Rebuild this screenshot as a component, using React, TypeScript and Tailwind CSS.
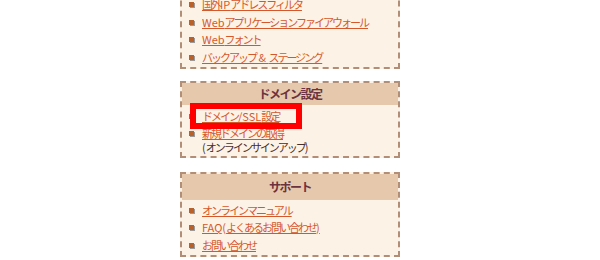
import * as React from "react";

type Item = { label: string; note?: string };

const securityItems: Item[] = [
  { label: "国外IPアドレスフィルタ" },
  { label: "Webアプリケーションファイアウォール" },
  { label: "Webフォント" },
  { label: "バックアップ & ステージング" },
];

const domainItems: Item[] = [
  { label: "ドメイン/SSL設定" },
  { label: "新規ドメインの取得", note: "(オンラインサインアップ)" },
];

const supportItems: Item[] = [
  { label: "オンラインマニュアル" },
  { label: "FAQ(よくあるお問い合わせ)" },
  { label: "お問い合わせ" },
];

// latin runs keep normal spacing, kana gets squeezed
function Squeeze({ text }: { text: string }) {
  const parts = text.split(/([A-Za-z/&() ]+)/).filter(Boolean);
  return (
    <>
      {parts.map((p, i) =>
        /^[A-Za-z/&() ]+$/.test(p) ? (
          <span key={i} className="tracking-[0px] whitespace-pre">
            {p}
          </span>
        ) : (
          <span key={i}>{p}</span>
        )
      )}
    </>
  );
}

function MenuList({ items, className }: { items: Item[]; className?: string }) {
  return (
    <ul className={`flex flex-col gap-[3.5px] pl-[7px] ${className ?? ""}`}>
      {items.map((item) => (
        <li key={item.label} className="flex items-start leading-[14px]">
          <span className="mt-[5px] mr-[8px] h-[5px] w-[5px] shrink-0 bg-[#b8612a] shadow-[1px_1px_0_#9a9a9a]" />
          <span className="flex flex-col">
            <a href="#" className="text-[#d4582c] underline underline-offset-[1px]">
              <Squeeze text={item.label} />
            </a>
            {item.note && (
              <span className="text-[#4a2e2a]">
                <Squeeze text={item.note} />
              </span>
            )}
          </span>
        </li>
      ))}
    </ul>
  );
}

function MenuBox({
  title,
  headerClass,
  children,
  className,
}: {
  title?: string;
  headerClass?: string;
  children: React.ReactNode;
  className?: string;
}) {
  return (
    <div
      className={`relative w-[220px] border-2 border-dashed border-[#b38e77] bg-[#fdf2e6] ${className ?? ""}`}
    >
      {title && (
        <div
          className={`flex items-center justify-center bg-[#e6c9ad] font-bold text-[#6b3340] ${headerClass ?? ""}`}
        >
          {title}
        </div>
      )}
      {children}
    </div>
  );
}

export default function App() {
  return (
    <div
      className="h-[260px] w-[600px] overflow-hidden bg-white text-[11px] tracking-[-2px]"
      style={{ fontFamily: '"Noto Sans CJK JP", "Noto Sans", sans-serif' }}
    >
      <div className="flex flex-col pl-[180px]">
        <MenuBox className="-mt-[10px] border-t-transparent">
          <MenuList items={securityItems} className="pt-[5px] pb-[3px]" />
        </MenuBox>

        <MenuBox
          title="ドメイン設定"
          headerClass="h-[22px] text-[12px] tracking-[-1.5px]"
          className="mt-[12px]"
        >
          <MenuList items={domainItems} className="pt-[4px] pb-[1.5px]" />
          <div className="absolute left-[8px] top-[20px] h-[26px] w-[112px] border-[6px] border-[#ff0000]" />
        </MenuBox>

        <MenuBox
          title="サポート"
          headerClass="h-[26px] text-[12px] tracking-[-1.5px]"
          className="mt-[14px]"
        >
          <MenuList items={supportItems} className="pt-[3px] pb-[3px]" />
        </MenuBox>
      </div>
    </div>
  );
}
